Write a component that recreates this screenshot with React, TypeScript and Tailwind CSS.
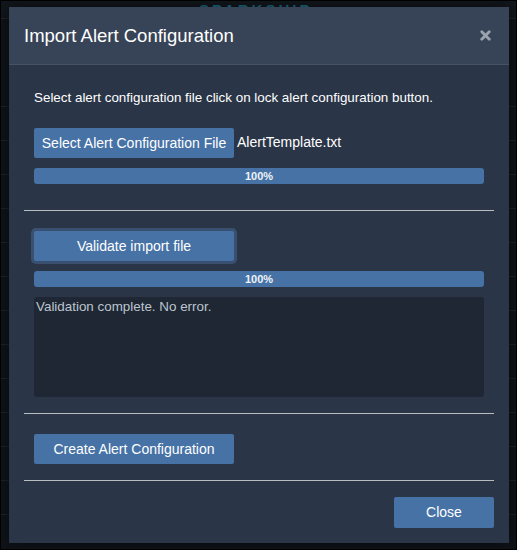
import { X } from 'lucide-react'

const font = { fontFamily: '"Liberation Sans", Arial, sans-serif' }

function ProgressBar({ value }: { value: number }) {
  return (
    <div className="h-4 w-full overflow-hidden rounded-[3px] bg-[#1e2733]">
      <div
        className="flex h-full items-center justify-center bg-[#4672a6] text-[11px] font-bold leading-none text-[#eef2f6]"
        style={{ width: `${value}%` }}
      >
        {value}%
      </div>
    </div>
  )
}

function Divider() {
  return <div className="-mx-[10px] h-px bg-[#b9bcc0]" />
}

function Button({ label, className = '' }: { label: string; className?: string }) {
  return (
    <button
      className={`flex h-[30px] w-[200px] items-center justify-center rounded-[2px] bg-[#4672a6] text-[14px] text-white ${className}`}
    >
      {label}
    </button>
  )
}

export default function App() {
  return (
    <div className="relative h-[550px] w-[517px] overflow-hidden border border-black bg-[#0f1318]" style={font}>
      {/* page behind the dialog */}
      <div className="h-[18px] border-b border-[#1f262e] bg-[#12171d]">
        <p className="pl-[198px] text-[15px] font-bold leading-[18px] tracking-[3px] text-[#1d6d86]">SPARKSHIP</p>
      </div>
      <div className="flex flex-col">
        {[88, 34, 34, 34, 34, 34, 34, 34, 34, 34, 34, 34, 34].map((h, i) => (
          <div key={i} className="border-b border-[#1d232a]" style={{ height: h }} />
        ))}
      </div>

      {/* modal */}
      <div className="absolute left-[8px] top-[6px] flex h-[536px] w-[500px] flex-col bg-[#2a3547] shadow-[0_0_12px_rgba(0,0,0,0.6)]">
        <div className="flex h-[58px] items-center justify-between border-b border-[#465366] bg-[#374457] pl-[15px] pr-[16px]">
          <h2 className="text-[18.5px] text-white">Import Alert Configuration</h2>
          <X size={15} strokeWidth={4.5} className="text-[#9ba4ae]" />
        </div>

        <div className="flex flex-1 flex-col px-[25px]">
          <p className="mt-[23px] text-[13.4px] leading-5 text-white">
            Select alert configuration file click on lock alert configuration button.
          </p>

          <div className="mt-[20px] flex items-start gap-[3px]">
            <Button label="Select Alert Configuration File" />
            <span className="mt-[4px] text-[14px] leading-5 text-white">AlertTemplate.txt</span>
          </div>

          <div className="mt-[10px]">
            <ProgressBar value={100} />
          </div>

          <div className="mt-[26px]">
            <Divider />
          </div>

          <div className="mt-[20px]">
            <Button label="Validate import file" className="ring-[3px] ring-[#3a5070]" />
          </div>

          <div className="mt-[10px]">
            <ProgressBar value={100} />
          </div>

          <div className="mt-[10px] h-[100px] rounded-[3px] bg-[#1e2733] px-[2px] py-[1px] text-[13.4px] leading-[18px] text-[#bcc5cf]">
            Validation complete. No error.
          </div>

          <div className="mt-[16px]">
            <Divider />
          </div>

          <div className="mt-[20px]">
            <Button label="Create Alert Configuration" />
          </div>

          <div className="mt-[16px]">
            <Divider />
          </div>

          <div className="-mr-[10px] mt-[16px] flex justify-end">
            <button className="h-[31px] w-[100px] rounded-[2px] bg-[#4672a6] text-[14px] text-white">Close</button>
          </div>
        </div>
      </div>
    </div>
  )
}
